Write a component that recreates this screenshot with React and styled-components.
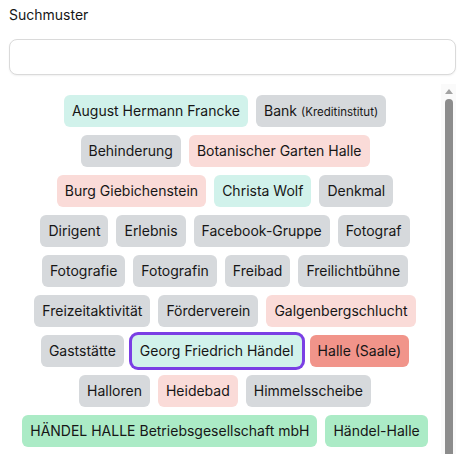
import React from 'react';
import styled, { createGlobalStyle } from 'styled-components';

const GlobalStyle = createGlobalStyle`
  html, body {
    margin: 0;
    padding: 0;
    background: #ffffff;
    overflow: hidden;
  }
  body {
    font-family: Inter, "Liberation Sans", sans-serif;
    color: #161616;
  }
`;

const Wrapper = styled.div`
  padding: 5px 9px 0 9px;
`;

const Label = styled.div`
  font-size: 14px;
  line-height: 20px;
  color: #161616;
  margin-bottom: 14px;
`;

const SearchInput = styled.input`
  display: block;
  box-sizing: border-box;
  width: 100%;
  height: 36px;
  border: 1px solid #dadada;
  border-radius: 8px;
  box-shadow: 0 1px 2px rgba(0, 0, 0, 0.06);
  padding: 0 10px;
  font-family: inherit;
  font-size: 14px;
  outline: none;
`;

const ListArea = styled.div`
  margin-top: 9px;
  height: 390px;
  display: flex;
  overflow: hidden;
`;

const TagList = styled.div`
  flex: 1;
  box-sizing: border-box;
  padding: 11px 12px 12px 12px;
  display: flex;
  flex-wrap: wrap;
  justify-content: center;
  align-content: flex-start;
  gap: 8px;
`;

const ScrollTrack = styled.div`
  width: 15px;
  flex: none;
  display: flex;
  flex-direction: column;
  background: #fafafa;
`;

const ScrollButton = styled.div`
  height: 15px;
  display: flex;
  align-items: center;
  justify-content: center;
  padding-left: 1px;
`;

const ScrollThumb = styled.div`
  flex: 1;
  width: 8px;
  margin-left: 4px;
  border-radius: 4px 4px 0 0;
  background: #8c8c8c;
`;

const colors = {
  gray: '#d6d9dc',
  mint: '#d1f2eb',
  pink: '#fadbd8',
  salmon: '#f1948a',
  green: '#abebc6',
};

const Tag = styled.span`
  display: inline-flex;
  align-items: baseline;
  gap: 4px;
  height: 32px;
  box-sizing: border-box;
  padding: 6px 8px;
  font-size: 14px;
  line-height: 20px;
  border-radius: 6px;
  white-space: nowrap;
  color: #161616;
  background: ${(p) => colors[p.$tone]};
  box-shadow: ${(p) => (p.$selected ? '0 0 0 3px #7a3fe4' : 'none')};
`;

const Small = styled.small`
  font-size: 11.5px;
`;

const tags = [
  ['August Hermann Francke', 'mint'],
  ['Bank', 'gray', '(Kreditinstitut)'],
  ['Behinderung', 'gray'],
  ['Botanischer Garten Halle', 'pink'],
  ['Burg Giebichenstein', 'pink'],
  ['Christa Wolf', 'mint'],
  ['Denkmal', 'gray'],
  ['Dirigent', 'gray'],
  ['Erlebnis', 'gray'],
  ['Facebook-Gruppe', 'gray'],
  ['Fotograf', 'gray'],
  ['Fotografie', 'gray'],
  ['Fotografin', 'gray'],
  ['Freibad', 'gray'],
  ['Freilichtbühne', 'gray'],
  ['Freizeitaktivität', 'gray'],
  ['Förderverein', 'gray'],
  ['Galgenbergschlucht', 'pink'],
  ['Gaststätte', 'gray'],
  ['Georg Friedrich Händel', 'mint', null, true],
  ['Halle (Saale)', 'salmon'],
  ['Halloren', 'gray'],
  ['Heidebad', 'pink'],
  ['Himmelsscheibe', 'gray'],
  ['HÄNDEL HALLE Betriebsgesellschaft mbH', 'green'],
  ['Händel-Halle', 'green'],
];

const App = () => (
  <Wrapper>
    <GlobalStyle />
    <Label>Suchmuster</Label>
    <SearchInput type="text" />
    <ListArea>
      <TagList>
        {tags.map(([name, tone, note, selected]) => (
          <Tag key={name} $tone={tone} $selected={selected}>
            {name}
            {note && <Small>{note}</Small>}
          </Tag>
        ))}
      </TagList>
      <ScrollTrack>
        <ScrollButton>
          <svg width="8" height="5" viewBox="0 0 8 5">
            <path d="M0 5 L4 0 L8 5 Z" fill="#a3a3a3" />
          </svg>
        </ScrollButton>
        <ScrollThumb />
      </ScrollTrack>
    </ListArea>
  </Wrapper>
);

export default App;
